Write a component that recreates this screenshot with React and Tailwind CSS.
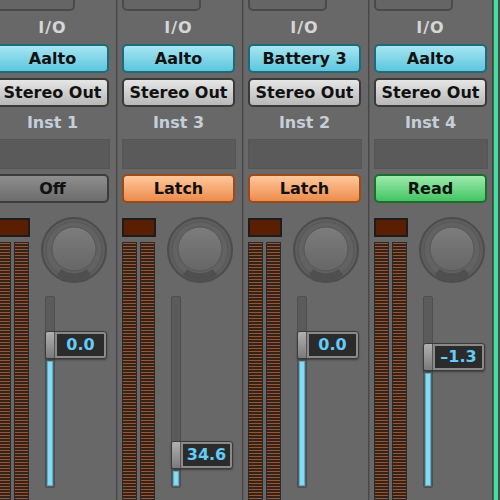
import React from "react";

const strips = [
  { out: "Aalto", name: "Inst 1", auto: "Off", val: "0.0", y: 330, w: 124 },
  { out: "Aalto", name: "Inst 3", auto: "Latch", val: "34.6", y: 440, w: 124 },
  { out: "Battery 3", name: "Inst 2", auto: "Latch", val: "0.0", y: 330, w: 124 },
  { out: "Aalto", name: "Inst 4", auto: "Read", val: "-1.3", y: 342, w: 122 },
];

const font = { fontFamily: '"DejaVu Sans", "Liberation Sans", sans-serif' };

function AutoButton({ mode }) {
  let cls =
    "bg-[linear-gradient(to_bottom,#8e8e8e,#6c6c6c)] border-[#3c3c3c]";
  if (mode === "Latch")
    cls = "bg-[linear-gradient(to_bottom,#ffc89c,#ec8c4c)] border-[#9c4a1c]";
  if (mode === "Read")
    cls = "bg-[linear-gradient(to_bottom,#9cecac,#44c464)] border-[#1c6e30]";
  return (
    <div
      className={`mt-[5px] h-[29px] w-[113px] rounded-[5px] border-2 flex items-center justify-center text-[16px] font-bold text-[#111] ${cls}`}
    >
      {mode}
    </div>
  );
}

function Knob() {
  return (
    <svg width="68" height="70" viewBox="0 0 68 70" className="ml-[10px] shrink-0">
      <circle cx="34" cy="34" r="32" fill="#5e5e5e" stroke="#4c4c4c" strokeWidth="2" />
      <circle cx="34" cy="34" r="28" fill="#626262" stroke="#575757" strokeWidth="1" />
      <path d="M19 56 A24 24 0 0 0 49 56" fill="none" stroke="#4f4f4f" strokeWidth="8" />
      <defs>
        <linearGradient id="kg" x1="0" y1="0" x2="0" y2="1">
          <stop offset="0" stopColor="#7c7c7c" />
          <stop offset="1" stopColor="#666" />
        </linearGradient>
      </defs>
      <circle cx="34" cy="33" r="22" fill="url(#kg)" stroke="#555" strokeWidth="1" />
    </svg>
  );
}

function Meter() {
  return (
    <div className="w-[15px] h-full border border-[#2a2a2a] bg-[repeating-linear-gradient(to_bottom,#9a5632_0px,#9a5632_1px,#33231a_1px,#33231a_3px)]" />
  );
}

function Strip({ s, first }) {
  const dispTop = s.y - 296;
  return (
    <div
      className={`flex flex-col shrink-0 h-[500px] pl-[4px] bg-[#686868] ${first ? "-ml-[8px]" : ""}`}
      style={{ width: s.w }}
    >
      <div className="h-[13px] w-[79px] -mt-[2px] rounded-b-[5px] border-2 border-[#4a4a4a] bg-[#656565]" />
      <div className="h-[33px] flex items-center justify-center w-[113px] text-[16px] font-bold tracking-[1px] text-[#d6d6d6]">
        I/O
      </div>
      <div className="h-[29px] w-[113px] rounded-[5px] border-2 border-[#1f6a78] bg-[linear-gradient(to_bottom,#a6e6f2,#5cc6de)] flex items-center justify-center text-[16px] font-bold text-[#111]">
        {s.out}
      </div>
      <div className="mt-[5px] h-[29px] w-[113px] rounded-[5px] border-2 border-[#3a3a3a] bg-[linear-gradient(to_bottom,#e6e6e6,#b8b8b8)] flex items-center justify-center text-[16px] font-bold text-[#111]">
        Stereo Out
      </div>
      <div className="h-[32px] w-[113px] flex items-center justify-center text-[16px] font-bold text-[#c6cfd9]">
        {s.name}
      </div>
      <div className="h-[30px] w-[114px] border border-[#555] bg-[#5a5a5a]" />
      <AutoButton mode={s.auto} />
      <div className="flex flex-row mt-[13px] flex-1">
        <div className="flex flex-col w-[34px] shrink-0 pt-[2px]">
          <div className="h-[19px] w-[34px] border-2 border-[#1c1c1c] bg-[#5a1f00]" />
          <div className="flex flex-row gap-[3px] mt-[5px] flex-1">
            <Meter />
            <Meter />
          </div>
        </div>
        <div className="flex flex-col">
          <Knob />
          <div className="relative ml-[15px] mt-[10px] h-[192px] w-[10px] rounded-[2px] border border-[#4e4e4e] bg-[#5b5b5b]">
            <div
              className="absolute left-[1px] w-[6px] bottom-[1px] bg-[#82dcf6] border border-[#5ab0cc]"
              style={{ top: dispTop + 30 }}
            />
            <div
              className="absolute -left-[1px] h-[28px] w-[62px] flex flex-row rounded-[3px] border border-[#3a3a3a] bg-[#8a8a8a] shadow-[0_1px_2px_rgba(0,0,0,0.4)]"
              style={{ top: dispTop }}
            >
              <div className="w-[9px] h-full rounded-l-[2px] bg-[linear-gradient(to_bottom,#b0b0b0,#7a7a7a)] border-r border-[#555]" />
              <div className="flex-1 m-[2px] bg-[#2b2b2b] flex items-center justify-center text-[16px] font-bold text-[#62ccfa]">
                {s.val === "-1.3" ? "–1.3" : s.val}
              </div>
            </div>
          </div>
        </div>
      </div>
    </div>
  );
}

export default function App() {
  return (
    <div className="w-[500px] h-[500px] overflow-hidden flex flex-row bg-[#686868]" style={font}>
      {strips.map((s, i) => (
        <React.Fragment key={i}>
          <Strip s={s} first={i === 0} />
          <div className="w-[2px] h-[500px] shrink-0 bg-[#474747] border-r border-[#5a5a5a]" />
        </React.Fragment>
      ))}
      <div className="w-[4px] h-[500px] shrink-0 bg-[#3ae49a]" />
      <div className="w-[4px] h-[500px] shrink-0 bg-[#4a4a4a]" />
    </div>
  );
}
